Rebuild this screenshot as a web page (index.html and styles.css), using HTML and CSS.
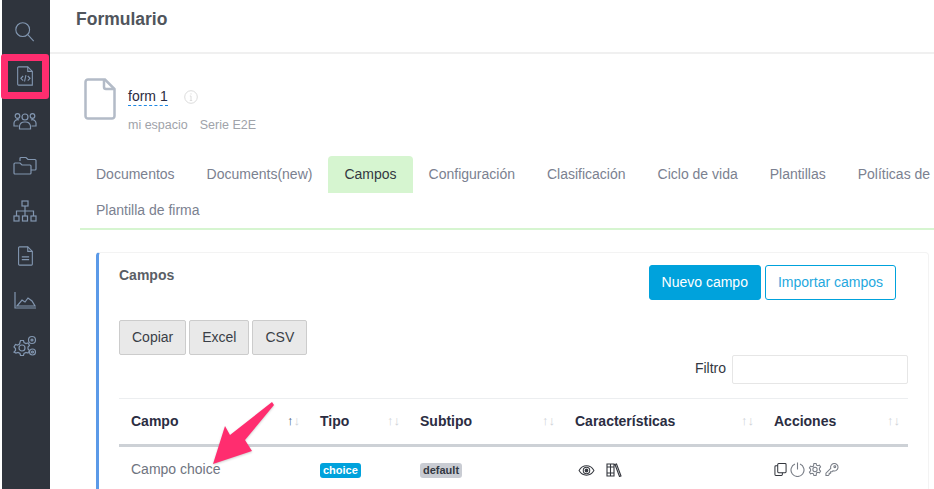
FILE: index.html
```html
<!DOCTYPE html>
<html lang="es">
<head>
<meta charset="utf-8">
<title>Formulario</title>
<link rel="stylesheet" href="styles.css">
</head>
<body>
<div class="app">
  <nav class="sidebar">
    <svg class="nav-icon" viewBox="0 0 24 24"><circle cx="9.500" cy="10.500" r="7.500"/><path d="M15 16l6.500 7"/></svg>
    <svg class="nav-icon" viewBox="0 0 24 24"><path d="M5 2h10l5 5v15H5a1 1 0 0 1-1-1V3a1 1 0 0 1 1-1z"/><path d="M15 2v5h5"/><path d="M10 12l-2.500 2.500L10 17M15 12l2.500 2.500L15 17M13 11l-1.500 7"/></svg>
    <svg class="nav-icon wide" viewBox="0 0 24 20"><circle cx="12" cy="6" r="3"/><path d="M6.500 18v-3a5 5 0 0 1 5-4h1a5 5 0 0 1 5 4v3z"/><circle cx="4.500" cy="5" r="2.300"/><circle cx="19.500" cy="5" r="2.300"/><path d="M5.500 15H1v-3a3.500 3.500 0 0 1 5-3M18.500 15H23v-3a3.500 3.500 0 0 0-5-3"/></svg>
    <svg class="nav-icon wide" viewBox="0 0 24 20"><path d="M7 5V2.500A1 1 0 0 1 8 1.500h5l2 2h7a1 1 0 0 1 1 1V13a1 1 0 0 1-1 1h-4"/><path d="M1 8a1 1 0 0 1 1-1h5l2 2h8a1 1 0 0 1 1 1v7a1 1 0 0 1-1 1H2a1 1 0 0 1-1-1z"/></svg>
    <svg class="nav-icon wide" viewBox="0 0 24 22"><rect x="9" y="1" width="6" height="5"/><rect x="1" y="16" width="5" height="5"/><rect x="9.500" y="16" width="5" height="5"/><rect x="18" y="16" width="5" height="5"/><path d="M12 6v10M3.500 16v-5h17v5"/></svg>
    <svg class="nav-icon" viewBox="0 0 24 24"><path d="M6 2h9l5 5v14a1 1 0 0 1-1 1H6a1 1 0 0 1-1-1V3a1 1 0 0 1 1-1z"/><path d="M15 2v5h5M8.500 13h8M8.500 16h8"/></svg>
    <svg class="nav-icon wide" viewBox="0 0 24 20"><path d="M2 1v16h21"/><path d="M4 15l5-6 3 2 3-4 4 3 3 5z"/></svg>
    <svg class="nav-icon wide" viewBox="0 0 24 22"><circle cx="9" cy="13" r="3"/><path d="M7.500 5.500h3l.5 2 2 1 2-.5 1.500 2.500-1.500 1.500v2l1.500 1.500-1.500 2.500-2-.5-2 1-.5 2h-3l-.5-2-2-1-2 .5L1 17l1.500-1.500v-2L1 12l1.500-2.500 2 .5 2-1z"/><circle cx="19" cy="5" r="3.500"/><circle cx="19" cy="5" r="1"/><circle cx="19.500" cy="17" r="3"/><circle cx="19.500" cy="17" r="1"/></svg>
  </nav>
  <main class="main">
    <header class="topbar"><h1 class="page-title">Formulario</h1></header>
    <section class="doc-head">
      <svg class="doc-icon" viewBox="0 0 32 42"><path d="M4 1.500h17L30.500 11v27a2.500 2.500 0 0 1-2.500 2.500H4A2.500 2.500 0 0 1 1.500 38V4A2.500 2.500 0 0 1 4 1.500z"/><path d="M20 1.500V9a2 2 0 0 0 2 2h8.500"/></svg>
      <div class="doc-text">
        <div class="doc-name-row">
          <span class="doc-name">form 1</span>
          <svg class="info-icon" viewBox="0 0 14 14"><circle cx="7" cy="7" r="6.300"/><path d="M7 6v4.500M5.800 10.500h2.400M5.800 6H7M7 3.300v1.200"/></svg>
        </div>
        <div class="doc-meta"><span>mi espacio</span><span>Serie E2E</span></div>
      </div>
    </section>
    <ul class="tabs">
      <li class="tab">Documentos</li>
      <li class="tab">Documents(new)</li>
      <li class="tab active">Campos</li>
      <li class="tab">Configuración</li>
      <li class="tab">Clasificación</li>
      <li class="tab">Ciclo de vida</li>
      <li class="tab">Plantillas</li>
      <li class="tab">Políticas de seguridad</li>
      <li class="tab">Plantilla de firma</li>
    </ul>
    <section class="card">
      <div class="card-head">
        <h2 class="card-title">Campos</h2>
        <div class="actions">
          <button class="btn primary">Nuevo campo</button>
          <button class="btn outline">Importar campos</button>
        </div>
      </div>
      <div class="exports">
        <button class="export">Copiar</button>
        <button class="export">Excel</button>
        <button class="export">CSV</button>
      </div>
      <div class="filter"><label class="filter-label">Filtro</label><input class="filter-input" type="text"></div>
      <table class="grid">
        <thead>
          <tr>
            <th class="col-campo"><div class="th"><span>Campo</span><span class="sort"><b class="on">↑</b>↓</span></div></th>
            <th class="col-tipo"><div class="th"><span>Tipo</span><span class="sort">↑↓</span></div></th>
            <th class="col-subtipo"><div class="th"><span>Subtipo</span><span class="sort">↑↓</span></div></th>
            <th class="col-car"><div class="th"><span>Características</span><span class="sort">↑↓</span></div></th>
            <th class="col-acc"><div class="th"><span>Acciones</span><span class="sort">↑↓</span></div></th>
          </tr>
        </thead>
        <tbody>
          <tr>
            <td>Campo choice</td>
            <td><span class="badge blue">choice</span></td>
            <td><span class="badge gray">default</span></td>
            <td>
              <div class="icons gap">
                <svg class="ico eye" viewBox="0 0 18 14"><path d="M1 7c2-3.500 5-5 8-5s6 1.500 8 5c-2 3.500-5 5-8 5S3 10.500 1 7z"/><circle cx="9" cy="7" r="3.500"/><circle class="solid" cx="9" cy="7" r="1.500"/></svg>
                <svg class="ico books" viewBox="0 0 16 14"><path d="M1 1h3.500v12H1zM4.500 1H8v12H4.500zM1 4h7M1 10h7M9 1.500l1.500-.5L15 13l-1.500.5z"/></svg>
              </div>
            </td>
            <td>
              <div class="icons">
                <svg class="ico act-copy" viewBox="0 0 14 15"><path d="M4 3.500H2a1 1 0 0 0-1 1V13a1 1 0 0 0 1 1h6a1 1 0 0 0 1-1v-2"/><rect x="4" y="1" width="9" height="10" rx="1"/></svg>
                <svg class="ico act-power muted" viewBox="0 0 15 15"><path d="M5 2a6.500 6.500 0 1 0 5 0M7.500 0.500V7.500"/></svg>
                <svg class="ico act-gear muted" viewBox="0 0 15 15"><circle cx="7.500" cy="7.500" r="2.300"/><path d="M6.300 1h2.400l.4 1.800 1.500.7 1.700-.7 1.200 2-1.300 1.300v1.800l1.300 1.300-1.200 2-1.700-.7-1.500.7L8.700 14H6.300l-.4-1.800-1.500-.7-1.700.7-1.200-2 1.300-1.300V7.100L1.500 5.800l1.200-2 1.700.7 1.500-.7z"/></svg>
                <svg class="ico act-key muted" viewBox="0 0 15 15"><path d="M1 14v-2.500L6.200 6.300A4 4 0 1 1 8.700 8.800L7.500 10H6v1.500H4.500V13l-1 1z"/><circle cx="10.500" cy="4.500" r="1"/></svg>
              </div>
            </td>
          </tr>
        </tbody>
      </table>
    </section>
  </main>
</div>
<div class="highlight"></div>
<svg class="arrow" viewBox="0 0 934 489"><path d="M213 464L225 426L230 435L272 402L274 405L245 440L252 451Z"/></svg>
</body>
</html>
```
FILE: styles.css
```css
* { box-sizing: border-box; }
html, body { margin: 0; height: 100%; overflow: hidden; background: #fff; }
body { font-family: "Liberation Sans", Arial, sans-serif; font-size: 14px; color: #6f7480; }
.app { display: flex; height: 489px; padding-left: 2px; }
.sidebar { width: 48px; flex: none; background: #2f343d; display: flex; flex-direction: column; align-items: center; padding: 19px 2px 0 0; }
.nav-icon { width: 22px; height: 24px; margin-bottom: 21px; fill: none; stroke: #8296b0; stroke-width: 1.200; }
.nav-icon.wide { width: 24px; height: 24px; }
.main { flex: 1; min-width: 0; overflow: hidden; }
.topbar { height: 54px; border-bottom: 2px solid #f0f0f0; padding: 9px 0 0 26px; }
.page-title { margin: 0; font-size: 17.500px; line-height: 20px; font-weight: 700; color: #50555c; }
.doc-head { display: flex; margin: 24px 0 0 34px; height: 78px; }
.doc-icon { width: 32px; height: 42px; fill: none; stroke: #b3bbc7; stroke-width: 2.500; margin-right: 12px; }
.doc-text { padding-top: 9px; }
.doc-name-row { display: flex; align-items: center; gap: 16px; height: 20px; }
.doc-name { color: #2b2d42; border-bottom: 1px dashed #1e88e5; line-height: 17px; }
.info-icon { width: 14px; height: 14px; fill: none; stroke: #dcdcdc; stroke-width: 1; }
.doc-meta { display: flex; gap: 12px; margin-top: 10px; font-size: 12.500px; color: #a0a3aa; line-height: 16px; }
.tabs { list-style: none; display: flex; flex-wrap: wrap; width: 1000px; margin: 0 0 0 30px; padding: 0; height: 74px; border-bottom: 2px solid #d6f5d0; align-content: flex-start; }
.tab { height: 37px; line-height: 36px; padding: 0 16px; color: #7b8190; white-space: nowrap; border-radius: 4px 4px 0 0; }
.tab:last-child { height: 36px; line-height: 34px; }
.tab.active { background: #d6f5d0; color: #333842; }
.card { margin: 22px 5px 0 46px; height: 300px; border: 1px solid #f3f3f3; border-left: 3px solid #5b9ae8; border-radius: 4px; padding: 12px 20px 0 20px; }
.card-head { display: flex; justify-content: space-between; height: 55px; }
.card-title { margin: 1px 0 0; font-size: 14px; line-height: 18px; font-weight: 700; color: #5a5e66; }
.actions { display: flex; gap: 4px; margin-right: 12px; }
.btn { height: 35px; padding: 0 12px 1px; font: inherit; border-radius: 3px; border: 1px solid #00a2dc; }
.primary { background: #00a2dc; color: #fff; }
.outline { background: #fff; color: #1fa8de; }
.exports { display: flex; gap: 3px; }
.export { height: 35px; padding: 0 12px 1px; font: inherit; color: #3a3f47; background: #e9e9e9; border: 1px solid #ccc; border-radius: 2px; }
.filter { display: flex; justify-content: flex-end; align-items: center; gap: 6px; height: 29px; }
.filter-label { color: #333842; padding-bottom: 3px; }
.filter-input { width: 176px; height: 29px; border: 1px solid #e6e6e6; border-radius: 2px; background: #fff; }
.grid { width: 789px; table-layout: fixed; border-collapse: collapse; margin-top: 14px; border-top: 1px solid #eceef0; }
.grid th { height: 47px; padding: 0 8px 2px 12px; text-align: left; font-size: 14px; color: #2b2d42; border-bottom: 3px solid #cdd1d6; }
.col-campo { width: 189px; }
.col-tipo { width: 100px; }
.col-subtipo { width: 155px; }
.col-car { width: 199px; }
.col-acc { width: 146px; }
.th { display: flex; justify-content: space-between; align-items: center; }
.sort { font-size: 13px; font-weight: 400; color: #ced2d7; }
.sort .on { font-weight: 400; color: #44597a; }
.grid td { padding: 12px 12px 0; vertical-align: top; line-height: 20px; }
.badge { display: inline-block; padding: 0 3px; height: 15px; line-height: 15px; border-radius: 3px; font-size: 11px; font-weight: 700; vertical-align: top; margin-top: 4px; }
.blue { background: #00a2dc; color: #fff; }
.gray { background: #c9ccd3; color: #333842; }
.icons { display: flex; align-items: center; gap: 3px; height: 18px; margin-top: 1px; }
.icons.gap { gap: 11px; padding-left: 3px; margin-top: 2px; }
.ico { fill: none; stroke: #33363d; stroke-width: 1.100; }
.eye { width: 17px; height: 13px; }
.books { width: 16px; height: 14px; }
.act-copy { width: 13px; height: 15px; }
.act-power { width: 15px; height: 15px; }
.act-gear { width: 14px; height: 15px; }
.act-key { width: 14px; height: 15px; }
.muted { stroke: #777c85; }
.solid { fill: #33363d; }
.highlight { position: absolute; left: 1px; top: 54px; width: 48px; height: 45px; border: 7px solid #ff2d6f; border-radius: 3px; }
.arrow { position: absolute; left: 0; top: 0; width: 934px; height: 489px; pointer-events: none; filter: drop-shadow(0 1px 1px rgba(0,0,0,.2)); }
.arrow path { fill: #ff2d6f; }
```
